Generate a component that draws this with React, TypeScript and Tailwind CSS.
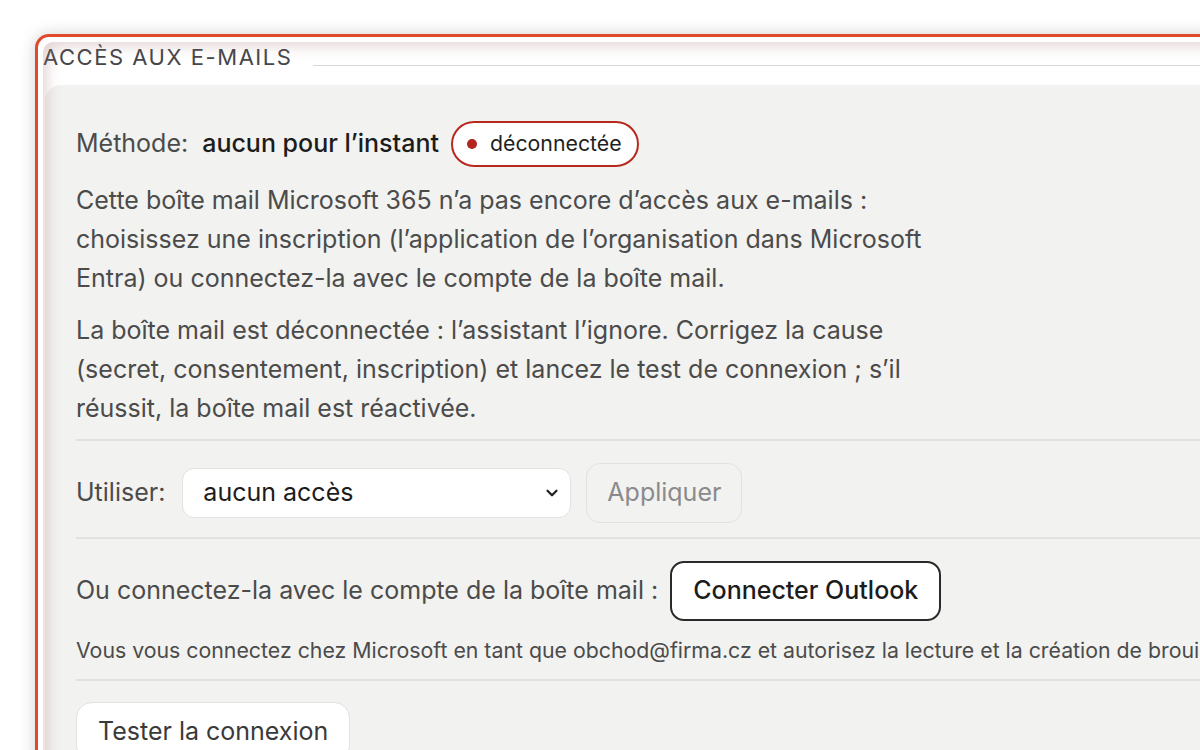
import { ChevronDown } from 'lucide-react'

const font = { fontFamily: 'Inter, "Noto Sans", sans-serif' }

export default function App() {
  return (
    <div className="w-[1200px] h-[750px] overflow-hidden bg-white pl-[35px] pt-[34px]" style={font}>
      <div className="relative w-[1250px] h-[800px] border-[3px] border-[#e04a2a] rounded-tl-[14px] bg-white shadow-[0_0_16px_rgba(0,0,0,0.18)]">
        <div className="relative ml-[5px] mt-[5px] h-full rounded-tl-[10px] bg-white">
          {/* legend */}
          <div className="flex items-end h-[26px]">
            <span className="text-[22px] leading-[22px] tracking-[0.07em] text-[#45454a] uppercase">
              Accès aux e-mails
            </span>
            <div className="flex-1 ml-[21px] mb-[2px] h-px bg-[#d8d8d8]" />
          </div>

          {/* panel */}
          <div className="ml-[2px] mt-[17px] rounded-tl-[16px] bg-[#f2f2f0] pl-[31px] pt-[36px] text-[#4b4b4b]">
            <div className="flex items-center h-[46px] text-[25px]">
              <span>Méthode:</span>
              <span className="ml-[14px] font-medium text-[#1c1c1c]">aucun pour l’instant</span>
              <span className="ml-[12px] flex items-center h-[46px] pl-[14px] pr-[15px] rounded-full border-2 border-[#b8291d] bg-white text-[21.3px] text-[#1f1f1f]">
                <span className="w-[10px] h-[10px] rounded-full bg-[#b3261e] mr-[13px]" />
                déconnectée
              </span>
            </div>

            <p className="mt-[14px] max-w-[870px] text-[25px] leading-[39px]">
              Cette boîte mail Microsoft 365 n’a pas encore d’accès aux e-mails : choisissez une inscription
              (l’application de l’organisation dans Microsoft Entra) ou connectez-la avec le compte de la boîte mail.
            </p>
            <p className="mt-[13px] max-w-[870px] text-[25px] leading-[39px]">
              La boîte mail est déconnectée : l’assistant l’ignore. Corrigez la cause (secret, consentement,
              inscription) et lancez le test de connexion ; s’il réussit, la boîte mail est réactivée.
            </p>

            <div className="mt-[11px] h-[2px] bg-[#e3e2df]" />

            <div className="mt-[22px] flex items-center h-[60px] text-[25px]">
              <span>Utiliser:</span>
              <div className="ml-[17px] flex items-center w-[389px] h-[50px] rounded-[12px] border border-[#e2e2e0] bg-white pl-[20px] pr-[9px] text-[#1c1c1c]">
                <span className="flex-1">aucun accès</span>
                <ChevronDown size={18} strokeWidth={3} className="text-[#222]" />
              </div>
              <div className="ml-[15px] flex items-center h-[60px] px-[20px] rounded-[14px] border border-[#e3e2df] bg-[#f2f2f0] text-[#8a8a8c]">
                Appliquer
              </div>
            </div>

            <div className="mt-[14px] h-[2px] bg-[#e3e2df]" />

            <div className="mt-[22px] flex items-center h-[60px] text-[25px]">
              <span>Ou connectez-la avec le compte de la boîte mail :</span>
              <div className="ml-[12px] flex items-center h-[60px] px-[21px] rounded-[14px] border-2 border-[#2a2a2a] bg-white text-[25px] font-medium text-[#1c1c1c]">
                Connecter Outlook
              </div>
            </div>

            <p className="mt-[15px] whitespace-nowrap text-[21.3px] leading-[28px]">
              Vous vous connectez chez Microsoft en tant que obchod@firma.cz et autorisez la lecture et la création de brouillons dans cette boîte mail.
            </p>

            <div className="mt-[15px] h-[2px] bg-[#e3e2df]" />

            <div className="mt-[21px] flex">
              <div className="flex items-center h-[60px] px-[21px] rounded-[16px] border border-[#e2e2e0] bg-white text-[25px] text-[#3a3a3a]">
                Tester la connexion
              </div>
            </div>
          </div>

          <div className="pointer-events-none absolute inset-0 rounded-tl-[10px] shadow-[inset_10px_10px_14px_-6px_rgba(170,120,120,0.32)]" />
        </div>
      </div>
    </div>
  )
}
